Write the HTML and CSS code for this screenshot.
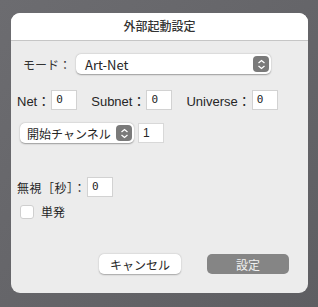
FILE: index.html
```html
<!DOCTYPE html>
<html lang="ja">
<head>
    <meta charset="UTF-8">
    <title>外部起動設定</title>
    <link rel="stylesheet" href="styles.css">
</head>
<body>
    <div class="dialog">
        <div class="dialog-title">外部起動設定</div>
        <div class="dialog-body">
            <div class="row mode-row">
                <span class="label">モード：</span>
                <div class="select wide">
                    <span>Art-Net</span>
                    <span class="stepper"><svg width="9" height="11" viewBox="0 0 9 11"><path d="M1.5 4 L4.5 1.5 L7.5 4 M1.5 7 L4.5 9.5 L7.5 7" fill="none" stroke="#fff" stroke-width="1.3"/></svg></span>
                </div>
            </div>
            <div class="row net-row">
                <span class="label">Net：</span>
                <div class="num">0</div>
                <span class="label gap">Subnet：</span>
                <div class="num">0</div>
                <span class="label gap">Universe：</span>
                <div class="num">0</div>
            </div>
            <div class="row channel-row">
                <div class="select short">
                    <span>開始チャンネル</span>
                    <span class="stepper"><svg width="9" height="11" viewBox="0 0 9 11"><path d="M1.5 4 L4.5 1.5 L7.5 4 M1.5 7 L4.5 9.5 L7.5 7" fill="none" stroke="#fff" stroke-width="1.3"/></svg></span>
                </div>
                <div class="num plain">1</div>
            </div>
            <div class="row ignore-row">
                <span class="label">無視［秒］：</span>
                <div class="num">0</div>
            </div>
            <div class="row check-row">
                <span class="checkbox"></span>
                <span class="label">単発</span>
            </div>
            <div class="buttons">
                <button class="btn">キャンセル</button>
                <button class="btn primary">設定</button>
            </div>
        </div>
    </div>
</body>
</html>
```

FILE: styles.css
```css
* {
    margin: 0;
    padding: 0;
    box-sizing: border-box;
    font-family: "Noto Sans CJK JP", "Liberation Sans", sans-serif;
}
body {
    width: 318px;
    height: 307px;
    background: linear-gradient(135deg, #6c6c70, #5e5e62);
    padding: 13px 10px 14px 11px;
}
.dialog {
    width: 297px;
    height: 280px;
    background-color: #ececec;
    border-radius: 9px;
    overflow: hidden;
    display: flex;
    flex-direction: column;
}
.dialog-title {
    height: 28px;
    background-color: #fff;
    border-bottom: 1px solid #c6c6c6;
    text-align: center;
    font-size: 12px;
    font-weight: 500;
    color: #333;
    line-height: 26px;
}
.dialog-body {
    flex: 1;
    padding: 13px 0 0 6px;
    display: flex;
    flex-direction: column;
    color: #262626;
    font-size: 12px;
}
.row {
    display: flex;
    align-items: center;
}
.mode-row {
    padding-left: 6px;
}
.mode-row .label {
    width: 53px;
    color: #333;
}
.select {
    height: 20px;
    background-color: #fff;
    border-radius: 5px;
    box-shadow: 0 0.5px 1.5px rgba(0,0,0,0.35);
    display: flex;
    align-items: center;
    justify-content: space-between;
    padding: 0 2px 0 9px;
}
.select.wide {
    width: 195px;
    font-family: "Liberation Sans", sans-serif;
    font-size: 13px;
}
.select.short {
    width: 114px;
    padding-left: 7px;
}
.stepper {
    width: 16px;
    height: 16px;
    background-color: #7a7a7a;
    border-radius: 4px;
    display: flex;
    align-items: center;
    justify-content: center;
}
.net-row {
    margin-top: 16px;
    font-family: "Liberation Sans", sans-serif;
    font-size: 13px;
}
.net-row .label {
    font-family: "Liberation Sans", "Noto Sans CJK JP", sans-serif;
}
.gap {
    margin-left: 14px;
}
.num {
    width: 26px;
    height: 20px;
    background-color: #fff;
    border: 1px solid #d2d2d2;
    font-family: "DejaVu Sans Mono", monospace;
    font-size: 11px;
    line-height: 18px;
    padding-left: 4px;
    margin-left: 1px;
}
.channel-row {
    margin-top: 13px;
    padding-left: 3px;
}
.num.plain {
    margin-left: 4px;
    font-family: "Liberation Sans", sans-serif;
    font-size: 12px;
    border-color: #d8d8d8;
}
.ignore-row {
    margin-top: 34px;
}
.ignore-row .label {
    letter-spacing: 0.5px;
}
.ignore-row .num {
    margin-left: 1px;
}
.check-row {
    margin-top: 6px;
    padding-left: 3px;
}
.checkbox {
    width: 14px;
    height: 14px;
    background-color: #fff;
    border: 1px solid #cfcfcf;
    border-radius: 3px;
    margin-right: 7px;
}
.buttons {
    margin-top: 34px;
    display: flex;
    gap: 26px;
    padding-left: 82px;
}
.btn {
    width: 82px;
    height: 20px;
    border: none;
    border-radius: 5px;
    background-color: #fff;
    box-shadow: 0 0.5px 1.5px rgba(0,0,0,0.3);
    font-size: 12px;
    color: #262626;
}
.btn.primary {
    background-color: #858585;
    color: #f0f0f0;
    box-shadow: none;
}
```
